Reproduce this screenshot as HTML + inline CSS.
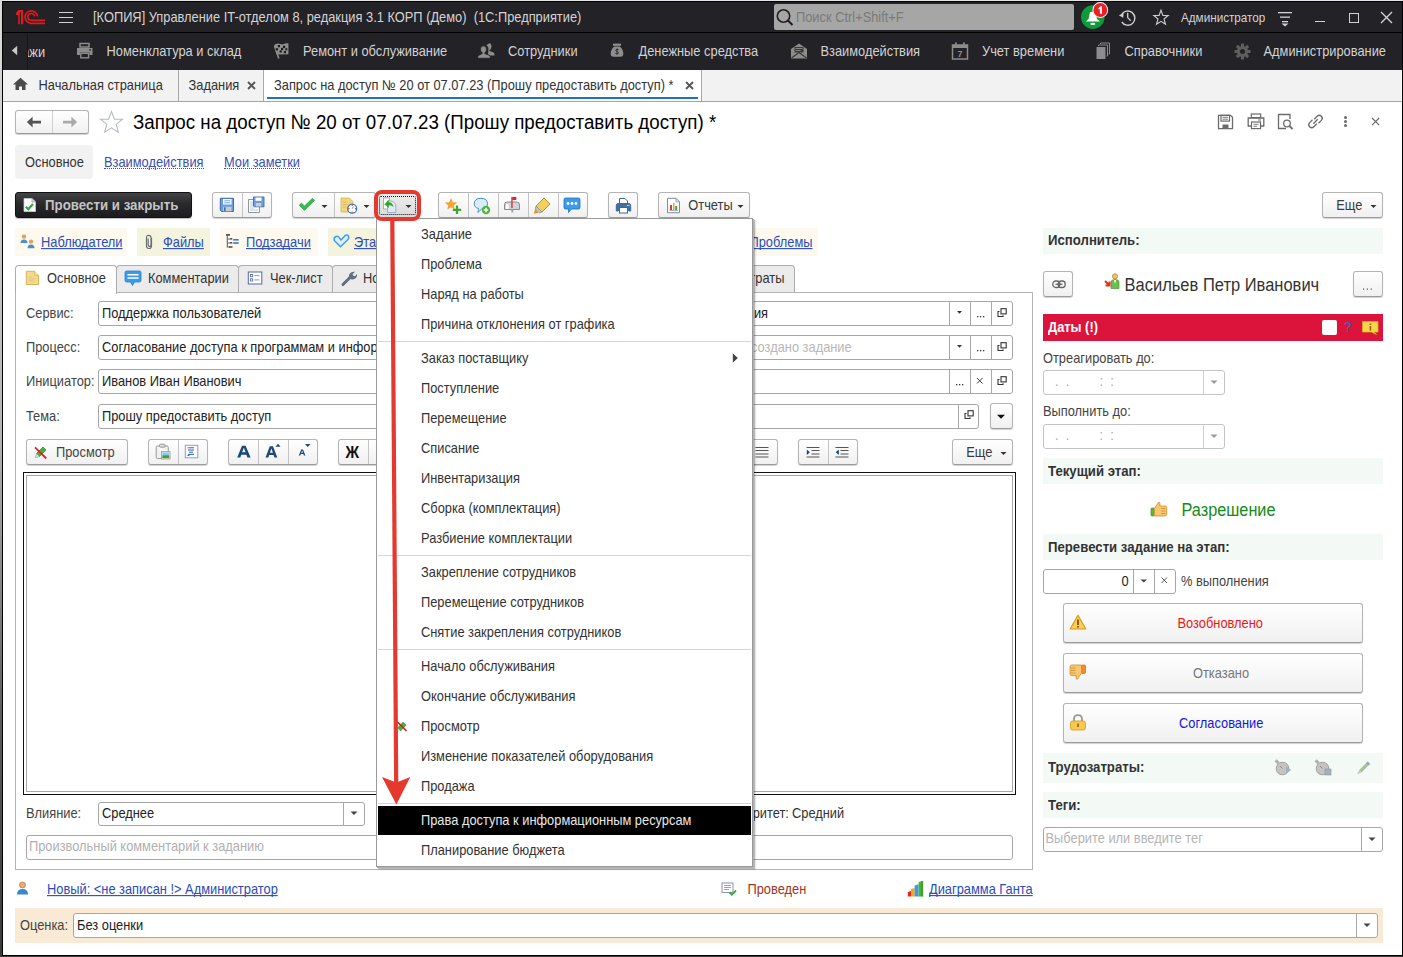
<!DOCTYPE html>
<html><head><meta charset="utf-8">
<style>
*{box-sizing:border-box;margin:0;padding:0}
html,body{width:1403px;height:957px;overflow:hidden;background:#fff}
body{position:relative;font-family:"Liberation Sans",sans-serif;font-size:13px;color:#333}
.a{position:absolute}
.t{position:absolute;white-space:nowrap;line-height:16px;font-size:12.85px;transform:scaleY(1.1);transform-origin:0 12.45px}
.btn{position:absolute;border:1px solid #b4b4b4;border-bottom-color:#9a9a9a;border-radius:3px;background:linear-gradient(#ffffff,#f0f0f0);box-shadow:0 1px 1px rgba(0,0,0,.18)}
.inp{position:absolute;border:1px solid #a6a6a6;border-radius:3px;background:#fff}
.vd{position:absolute;top:0;bottom:0;width:1px;background:#c8c8c8}
.lnk{color:#2b4cbb;text-decoration:underline;text-decoration-skip-ink:none}
.hdr{position:absolute;background:#f3faf6;left:1043px;width:340px;height:26px}
.hdr span{position:absolute;left:5px;top:5px;font-weight:bold;font-size:13.2px;line-height:16px;color:#333;white-space:nowrap;transform:scaleY(1.1);transform-origin:0 12.5px}
svg{position:absolute;overflow:visible}
</style></head><body>
<!-- outer frame -->
<div class="a" style="left:0;top:0;width:1403px;height:957px;background:#3c3f3c"></div>
<div class="a" style="left:0;top:0;width:1403px;height:2px;background:#e4e4e4"></div>
<div class="a" style="left:0;top:0;width:2px;height:957px;background:linear-gradient(#dcdcdc,#b4b4b4 45%,#5a5c5a 75%,#3a3c3a)"></div>
<div class="a" style="left:2px;top:1px;width:1401px;height:955px;background:#000"></div>
<div class="a" style="left:3px;top:2px;width:1399px;height:953px;background:#fff"></div>

<!-- title bar -->
<div class="a" style="left:3px;top:2px;width:1399px;height:30px;background:#232227"></div>
<div class="a" style="left:3px;top:32px;width:1399px;height:1px;background:#000"></div>
<!-- nav bar -->
<div class="a" style="left:3px;top:33px;width:1399px;height:37px;background:#232227"></div>
<div class="a" style="left:27px;top:33px;width:1px;height:37px;background:#18181b"></div>
<!-- tab bar -->
<div class="a" style="left:3px;top:70px;width:1398px;height:31px;background:#f2f2f2"></div>
<div class="a" style="left:3px;top:101px;width:1399px;height:1px;background:#a4a4a4"></div>


<!-- ===== TITLE BAR ===== -->
<svg style="left:0;top:0" width="60" height="32" viewBox="0 0 60 32">
 <path d="M16 13.3 L18.3 10 L23.1 10 L23.1 24.3 L21 24.3 L21 12.3 L19.8 12.3 L19.8 24.3 L18.2 24.3 L18.2 15 L16 15 Z" fill="#e3191d"/>
 <path d="M37.6 16.4 A6.3 6.3 0 1 0 31 23.4 L45 23.4" fill="none" stroke="#e3191d" stroke-width="1.7"/>
 <path d="M34.6 16.4 A3.4 3.4 0 1 0 31 20.3 L45 20.3" fill="none" stroke="#e3191d" stroke-width="1.7"/>
</svg>
<div class="a" style="left:59px;top:12px;width:14px;height:1px;background:#d2d2d2"></div>
<div class="a" style="left:59px;top:17px;width:14px;height:1px;background:#d2d2d2"></div>
<div class="a" style="left:59px;top:22px;width:14px;height:1px;background:#d2d2d2"></div>
<div class="t" style="left:93px;top:10px;color:#d4d4d4">[КОПИЯ] Управление IT-отделом 8, редакция 3.1 КОРП (Демо)&nbsp; (1С:Предприятие)</div>
<div class="a" style="left:774px;top:4px;width:300px;height:26px;background:#a6a6a6;border-radius:2px"></div>
<svg style="left:774px;top:4px" width="30" height="26"><circle cx="9.5" cy="12" r="6.2" fill="none" stroke="#1e1e1e" stroke-width="1.6"/><path d="M14 16.5 L18.5 21" stroke="#1e1e1e" stroke-width="2"/></svg>
<div class="t" style="left:796px;top:10px;color:#7a7a7a">Поиск Ctrl+Shift+F</div>
<svg style="left:1075px;top:0" width="40" height="32">
 <circle cx="17.8" cy="17.1" r="11.8" fill="#0f9a3c"/>
 <path d="M15 12 L20.5 12 L22 19 L25 21.6 L10.8 21.6 L13.6 19 Z" fill="#fff"/>
 <ellipse cx="17.8" cy="23.9" rx="2.6" ry="1.1" fill="#fff"/>
 <circle cx="25.3" cy="10" r="7.9" fill="#fff"/>
 <circle cx="25.3" cy="10" r="6.9" fill="#ec2024"/>
 <path d="M23.3 8.3 L25.6 6.3 L26.9 6.3 L26.9 13.8 L24.9 13.8 L24.9 8.9 L23.9 9.6 Z" fill="#fff"/>
</svg>
<svg style="left:1115px;top:8px" width="24" height="20" viewBox="0 0 24 20">
 <path d="M6.6 6.6 A7.1 7.1 0 1 1 6.8 14" fill="none" stroke="#d0d0d0" stroke-width="1.4"/>
 <path d="M3.8 7.2 L8.6 5.2 L8.2 9.8 Z" fill="#d0d0d0"/>
 <path d="M12.7 4.8 L12.7 9.6 L15.7 12.8" fill="none" stroke="#d0d0d0" stroke-width="1.3"/>
</svg>
<svg style="left:1150px;top:8px" width="22" height="20" viewBox="0 0 22 20">
 <path d="M11 2.2 L12.9 7.4 L18.2 7.6 L14 11 L15.5 16.3 L11 13.3 L6.5 16.3 L8 11 L3.8 7.6 L9.1 7.4 Z" fill="none" stroke="#cfcfcf" stroke-width="1.1" stroke-linejoin="miter"/>
</svg>
<div class="t" style="left:1181px;top:10px;font-size:11.7px;color:#d4d4d4">Администратор</div>
<svg style="left:1276px;top:8px" width="20" height="20">
 <rect x="2" y="4" width="14" height="1.3" fill="#d2d2d2"/><rect x="4" y="8.5" width="10" height="1.3" fill="#d2d2d2"/><rect x="6" y="13" width="6" height="1.3" fill="#d2d2d2"/>
 <path d="M5.5 15.5 L12.5 15.5 L9 18.5 Z" fill="#d2d2d2"/>
</svg>
<div class="a" style="left:1315px;top:21px;width:10px;height:1.4px;background:#d2d2d2"></div>
<div class="a" style="left:1349px;top:12.5px;width:10px;height:10px;border:1.4px solid #d2d2d2"></div>
<svg style="left:1379px;top:10px" width="16" height="16"><path d="M2 2 L13 13 M13 2 L2 13" stroke="#d2d2d2" stroke-width="1.4"/></svg>


<!-- ===== NAV BAR ===== -->
<svg style="left:10px;top:44px" width="10" height="14"><path d="M7.2 1.8 L7.2 11.2 L1.8 6.5 Z" fill="#c9c9c9"/></svg>
<div class="a" style="left:28px;top:33px;width:40px;height:37px;overflow:hidden"><div class="t" style="left:-36.5px;top:11.5px;color:#d2d2d2">Продажи</div></div>
<!-- printer -->
<svg style="left:76px;top:42px" width="18" height="18" viewBox="0 0 18 18">
 <path d="M4 1.5 H13 V5 H4 Z" fill="none" stroke="#8c8c8c" stroke-width="1.5"/>
 <path d="M1 6 H16.5 V13 H13.5 V10.5 H4 V13 H1 Z" fill="#8c8c8c"/>
 <rect x="4.8" y="11.3" width="7.8" height="4.5" fill="none" stroke="#8c8c8c" stroke-width="1.4"/>
 <rect x="13.2" y="7.2" width="1.6" height="1.4" fill="#232227"/>
</svg>
<div class="t" style="left:106.5px;top:44.2px;color:#d2d2d2">Номенклатура и склад</div>
<!-- flag -->
<svg style="left:272px;top:42px" width="20" height="18" viewBox="0 0 20 18">
 <path d="M2 3.2 Q3.5 1.6 6 1.6 L10.5 2.4 Q13 1.2 16.4 1.3 L16.4 12.3 L5.8 12.6 L4.5 12 Z" fill="#8e8e8e"/>
 <path d="M2.6 4 L6.8 16.5" stroke="#8e8e8e" stroke-width="1.6"/>
 <g fill="#1c1c1e"><rect x="5.8" y="3" width="2.2" height="2.2"/><rect x="11" y="3.8" width="2.2" height="2.2"/><rect x="3.8" y="6.2" width="2.2" height="2.2"/><rect x="9" y="5.9" width="2.2" height="2.2"/><rect x="13.3" y="6.2" width="2" height="2.2"/><rect x="7.6" y="8.4" width="2.2" height="2.2"/><rect x="11.8" y="9" width="2.2" height="2.2"/></g>
</svg>
<div class="t" style="left:303px;top:44.2px;color:#d2d2d2">Ремонт и обслуживание</div>
<!-- people -->
<svg style="left:477px;top:42px" width="20" height="18" viewBox="0 0 20 18">
 <g fill="#8e8e8e">
 <path d="M11.8 1.5 Q14.5 1.5 14.5 4.5 Q14.5 7 12.5 8 L12.5 9 L16.5 10.5 Q17.5 11 17.5 12.5 L17.5 13.5 L11 13.5 Z"/>
 <path d="M9.5 3.2 Q11.5 1 13.8 1.8 Q12.5 3 12.3 6.5 Z"/>
 </g>
 <path d="M6.5 3.8 Q9.6 3.8 9.6 7.2 Q9.6 9.8 7.8 10.8 L7.8 11.6 L12.2 13.2 Q13.3 13.7 13.3 15 L13.3 16.3 L0.7 16.3 L0.7 15 Q0.7 13.7 1.8 13.2 L5.2 11.6 L5.2 10.8 Q3.4 9.8 3.4 7.2 Q3.4 3.8 6.5 3.8 Z" fill="#8e8e8e" stroke="#232227" stroke-width="0.9"/>
</svg>
<div class="t" style="left:508px;top:44.2px;color:#d2d2d2">Сотрудники</div>
<!-- money bag -->
<svg style="left:609px;top:42px" width="16" height="18" viewBox="0 0 16 18">
 <path d="M4 1.6 H12 V3.8 H4 Z" fill="#8e8e8e"/>
 <path d="M5.2 4.6 H10.8 Q14.3 7.5 14.3 11.5 Q14.3 14.8 11.5 14.8 H4.5 Q1.7 14.8 1.7 11.5 Q1.7 7.5 5.2 4.6 Z" fill="#8e8e8e"/>
 <path d="M9.6 7.8 Q8 6.9 7 7.6 Q6 8.6 8 9.4 Q10.2 10.2 9.2 11.5 Q8 12.3 6.3 11.3 M8 6.5 V12.8" fill="none" stroke="#2a2a2c" stroke-width="0.9"/>
</svg>
<div class="t" style="left:638.5px;top:44.2px;color:#d2d2d2">Денежные средства</div>
<!-- envelope -->
<svg style="left:790px;top:42px" width="18" height="18" viewBox="0 0 18 18">
 <path d="M1 7 L9 1.5 L17 7 V16.5 H1 Z" fill="#8c8c8c"/>
 <rect x="4.5" y="5" width="9" height="5.5" fill="#3a3a3a"/>
 <path d="M5.5 6.5 h7 M5.5 8.5 h5" stroke="#8c8c8c" stroke-width="0.9"/>
 <path d="M1.5 16 L9 10.5 L16.5 16" fill="none" stroke="#3a3a3a" stroke-width="1.1"/>
</svg>
<div class="t" style="left:820.5px;top:44.2px;color:#d2d2d2">Взаимодействия</div>
<!-- calendar -->
<svg style="left:951px;top:42px" width="18" height="18" viewBox="0 0 18 18">
 <rect x="1.5" y="3" width="15" height="14" fill="none" stroke="#8c8c8c" stroke-width="1.5"/>
 <rect x="1.5" y="3" width="15" height="3" fill="#8c8c8c"/>
 <rect x="4" y="0.5" width="1.8" height="4" fill="#8c8c8c"/><rect x="12" y="0.5" width="1.8" height="4" fill="#8c8c8c"/>
 <text x="9" y="15.3" font-family="Liberation Sans" font-size="9" font-weight="bold" fill="#8c8c8c" text-anchor="middle">7</text>
</svg>
<div class="t" style="left:982px;top:44.2px;color:#d2d2d2">Учет времени</div>
<!-- copies -->
<svg style="left:1095px;top:42px" width="16" height="18" viewBox="0 0 16 18">
 <rect x="1.5" y="5" width="9" height="12" fill="#8c8c8c"/>
 <path d="M3.5 4 V3 H12.5 V14 H11.5" fill="none" stroke="#8c8c8c" stroke-width="1"/>
 <path d="M5.5 2 V1 H14.5 V12 H13.5" fill="none" stroke="#8c8c8c" stroke-width="1"/>
</svg>
<div class="t" style="left:1124.5px;top:44.2px;color:#d2d2d2">Справочники</div>
<!-- gear -->
<svg style="left:1234px;top:43px" width="17" height="17" viewBox="0 0 17 17">
 <g fill="#5e5e5e"><circle cx="8.5" cy="8.5" r="5.5"/>
 <rect x="7" y="0.5" width="3" height="16"/><rect x="0.5" y="7" width="16" height="3"/>
 <rect x="7" y="0.5" width="3" height="16" transform="rotate(45 8.5 8.5)"/><rect x="7" y="0.5" width="3" height="16" transform="rotate(-45 8.5 8.5)"/></g>
 <circle cx="8.5" cy="8.5" r="2.5" fill="#232227"/>
</svg>
<div class="t" style="left:1263.5px;top:44.2px;color:#d2d2d2">Администрирование</div>

<!-- ===== TAB BAR ===== -->
<svg style="left:12px;top:77px" width="17" height="14" viewBox="0 0 17 14">
 <path d="M8.5 0.8 L16 7.5 L13.5 7.5 L13.5 13 L10 13 L10 9.5 L7 9.5 L7 13 L3.5 13 L3.5 7.5 L1 7.5 Z" fill="#4a4a4a"/>
</svg>
<div class="t" style="left:38.5px;top:78.2px;color:#333">Начальная страница</div>
<div class="a" style="left:178px;top:70px;width:1px;height:31px;background:#a8a8a8"></div>
<div class="t" style="left:188.5px;top:78.2px;color:#333">Задания</div>
<svg style="left:246px;top:80px" width="11" height="11"><path d="M2 2 L9 9 M9 2 L2 9" stroke="#555" stroke-width="1.8"/></svg>
<div class="a" style="left:263px;top:70px;width:1px;height:31px;background:#a8a8a8"></div>
<div class="a" style="left:264px;top:70px;width:437px;height:31px;background:#fff"></div>
<div class="a" style="left:267px;top:97px;width:431px;height:2px;background:#1a73c8"></div>
<div class="t" style="left:274px;top:78.2px;color:#333">Запрос на доступ № 20 от 07.07.23 (Прошу предоставить доступ) *</div>
<svg style="left:684px;top:80px" width="11" height="11"><path d="M2 2 L9 9 M9 2 L2 9" stroke="#555" stroke-width="1.8"/></svg>
<div class="a" style="left:701px;top:70px;width:1px;height:31px;background:#a8a8a8"></div>


<!-- ===== FORM HEADER ===== -->
<div class="btn" style="left:15px;top:110px;width:74px;height:24px"></div>
<div class="a" style="left:52px;top:111px;width:1px;height:22px;background:#d0d0d0"></div>
<svg style="left:26px;top:116px" width="16" height="13" viewBox="0 0 16 13"><path d="M0.9 6.1 L6.6 0.8 L6.6 4.7 L15 4.7 L15 7.5 L6.6 7.5 L6.6 11.5 Z" fill="#545454"/></svg>
<svg style="left:62px;top:116px" width="16" height="13" viewBox="0 0 16 13"><path d="M15.1 6.1 L9.4 0.8 L9.4 4.7 L1 4.7 L1 7.5 L9.4 7.5 L9.4 11.5 Z" fill="#aaaaaa"/></svg>
<svg style="left:99px;top:110px" width="26" height="25" viewBox="0 0 26 25">
 <path d="M12.5 1.5 L15.4 9.1 L23.5 9.3 L17.2 14.4 L19.4 22.3 L12.5 17.8 L5.6 22.3 L7.8 14.4 L1.5 9.3 L9.6 9.1 Z" fill="none" stroke="#b4bcc4" stroke-width="1.1" stroke-linejoin="miter"/>
</svg>
<div class="t" style="left:133px;top:112px;font-size:18.75px;line-height:22px;color:#000">Запрос на доступ № 20 от 07.07.23 (Прошу предоставить доступ) *</div>
<!-- right icons -->
<svg style="left:1217px;top:114px" width="17" height="16" viewBox="0 0 17 16">
 <path d="M1.5 1.3 H13.5 L15.5 3.3 V14.7 H1.5 Z" fill="none" stroke="#6b6b6b" stroke-width="1.3"/>
 <rect x="4" y="1.3" width="8.5" height="5.8" fill="none" stroke="#6b6b6b" stroke-width="1.2"/>
 <path d="M5.5 3.3 h5.5 M5.5 5.2 h5.5" stroke="#6b6b6b" stroke-width="0.9"/>
 <rect x="5.5" y="10.5" width="6" height="4.5" fill="#6b6b6b"/>
</svg>
<svg style="left:1247px;top:113px" width="18" height="17" viewBox="0 0 18 17">
 <rect x="4.3" y="1" width="9.4" height="3.6" fill="none" stroke="#6b6b6b" stroke-width="1.2"/>
 <path d="M4 13 H1.2 V5 H16.8 V13 H14" fill="none" stroke="#6b6b6b" stroke-width="1.3"/>
 <rect x="4.5" y="9" width="9" height="6.6" fill="none" stroke="#6b6b6b" stroke-width="1.2"/>
 <path d="M6.5 11.3 h5 M6.5 13.3 h3.5 M11 7 h3" stroke="#6b6b6b" stroke-width="0.9"/>
</svg>
<svg style="left:1277px;top:113px" width="18" height="17" viewBox="0 0 18 17">
 <path d="M9 15.5 H1.5 V1.5 H13 V6" fill="none" stroke="#6b6b6b" stroke-width="1.3"/>
 <circle cx="10" cy="10.5" r="3.3" fill="none" stroke="#6b6b6b" stroke-width="1.3"/>
 <path d="M12.3 12.8 L15.5 16" stroke="#6b6b6b" stroke-width="1.8"/>
</svg>
<svg style="left:1307px;top:113px" width="18" height="17" viewBox="0 0 18 17">
 <path d="M7.2 6.3 L10.2 3.3 Q12.2 1.3 14.4 3.3 Q16.3 5.4 14.3 7.4 L11.5 10.2" fill="none" stroke="#6b6b6b" stroke-width="1.3"/>
 <path d="M9.8 10.7 L6.8 13.7 Q4.8 15.7 2.6 13.7 Q0.7 11.6 2.7 9.6 L5.5 6.8" fill="none" stroke="#6b6b6b" stroke-width="1.3"/>
 <path d="M6.3 10.7 L10.7 6.3" stroke="#6b6b6b" stroke-width="1.3"/>
</svg>
<svg style="left:1340px;top:114px" width="12" height="15"><circle cx="5.5" cy="3.4" r="1.5" fill="#6b6b6b"/><circle cx="5.5" cy="7.4" r="1.5" fill="#6b6b6b"/><circle cx="5.5" cy="11.4" r="1.5" fill="#6b6b6b"/></svg>
<svg style="left:1370px;top:116px" width="12" height="12"><path d="M2 2 L9.2 9.2 M9.2 2 L2 9.2" stroke="#6b6b6b" stroke-width="1.2"/></svg>

<!-- form tabs -->
<div class="a" style="left:15px;top:145px;width:78px;height:34px;background:#f2f2f2;border-radius:4px"></div>
<div class="t" style="left:25px;top:154.7px;color:#333">Основное</div>
<div class="t" style="left:104px;top:154.7px;color:#3a50b0">Взаимодействия</div>
<div class="a" style="left:104px;top:168px;width:100px;height:0;border-top:1px dotted #3a50b0"></div>
<div class="t" style="left:224px;top:154.7px;color:#3a50b0">Мои заметки</div>
<div class="a" style="left:224px;top:168px;width:76px;height:0;border-top:1px dotted #3a50b0"></div>


<!-- ===== TOOLBAR ===== -->
<div class="a" style="left:15px;top:192px;width:177px;height:26px;border-radius:3px;background:linear-gradient(#434346,#2a2a2d 45%,#1c1c1e);border:1px solid #111;box-shadow:0 1px 1px rgba(0,0,0,.25)"></div>
<svg style="left:22px;top:197px" width="16" height="16" viewBox="0 0 16 16">
 <path d="M2 1.5 H10 L13.5 5 V14.5 H2 Z" fill="#fff" stroke="#c9ccd4" stroke-width="0.8"/>
 <path d="M10 1.5 V5 H13.5" fill="#dde" stroke="#99a" stroke-width="0.8"/>
 <path d="M3.8 9.8 L6.3 12.2 L11 7" fill="none" stroke="#2fa83a" stroke-width="2.2"/>
</svg>
<div class="t" style="left:45px;top:197.6px;font-weight:bold;color:#c4c4c4;font-size:13.3px">Провести и закрыть</div>

<div class="btn" style="left:212px;top:192px;width:60px;height:26px"></div>
<div class="a" style="left:242px;top:193px;width:1px;height:24px;background:#c4c4c4"></div>
<svg style="left:219px;top:197px" width="16" height="16" viewBox="0 0 16 16">
 <path d="M1.3 1.3 H14.5 V14.5 H2.5 L1.3 13.3 Z" fill="#6d9ddb" stroke="#3d6cb0" stroke-width="1"/>
 <rect x="4" y="2" width="8.5" height="5.5" fill="#fff"/><path d="M5.3 3.8 h6 M5.3 5.8 h6" stroke="#6d9ddb" stroke-width="0.9"/>
 <rect x="4" y="9.8" width="8.5" height="4.5" fill="#c8cdd0"/><rect x="5" y="10.3" width="1.6" height="3.6" fill="#3d6cb0"/>
</svg>
<svg style="left:247px;top:196px" width="18" height="18" viewBox="0 0 18 18">
 <path d="M1.5 3.5 H12.5 V16.5 H1.5 Z" fill="#fff" stroke="#7d8a98" stroke-width="0.9"/>
 <path d="M3 6 h3 M3 8 h3 M3 10 h3 M3 12 h4 M3 14 h8" stroke="#98a4b0" stroke-width="0.6"/>
 <path d="M6.5 1 H17 V10.8 H7.3 L6.5 10 Z" fill="#6d9ddb" stroke="#3d6cb0" stroke-width="0.9"/>
 <rect x="8.5" y="1.5" width="6" height="3.3" fill="#fff"/>
 <rect x="8.7" y="7" width="5.5" height="3.5" fill="#c8cdd0"/>
</svg>

<div class="btn" style="left:292px;top:192px;width:84px;height:26px"></div>
<div class="a" style="left:334px;top:193px;width:1px;height:24px;background:#c4c4c4"></div>
<svg style="left:298px;top:197px" width="18" height="16" viewBox="0 0 18 16">
 <path d="M1.3 8.3 L6.5 13.3 L16.5 3.3 L14.3 1.4 L6.5 9.2 L3.5 6.2 Z" fill="#34c051" stroke="#1f9a36" stroke-width="0.8" stroke-linejoin="round"/>
</svg>
<svg style="left:320.5px;top:204px" width="8" height="5"><path d="M0.5 1 H6.5 L3.5 4 Z" fill="#333"/></svg>
<svg style="left:340px;top:197px" width="18" height="17" viewBox="0 0 18 17">
 <path d="M1 1 H9.3 L12.8 4.5 V15 H1 Z" fill="#f1d47e" stroke="#d9b449" stroke-width="0.8"/>
 <path d="M3 5 h3 M3 7.5 h4 M3 10 h3" stroke="#d1b060" stroke-width="0.7"/>
 <circle cx="12.2" cy="11.7" r="4.5" fill="#fff" stroke="#3d77b8" stroke-width="1.3"/>
 <circle cx="12.2" cy="8.3" r="0.7" fill="#e03030"/><circle cx="12.2" cy="15.1" r="0.7" fill="#e03030"/>
 <circle cx="8.8" cy="11.7" r="0.7" fill="#e03030"/><circle cx="15.6" cy="11.7" r="0.7" fill="#e03030"/>
 <path d="M12.2 11.7 L13.5 9.5" stroke="#3d77b8" stroke-width="0.8"/>
</svg>
<svg style="left:362.5px;top:204px" width="8" height="5"><path d="M0.5 1 H6.5 L3.5 4 Z" fill="#333"/></svg>
<!-- pressed button -->
<div class="a" style="left:376px;top:192px;width:42px;height:26px;background:linear-gradient(#eeeeee,#dadada);border:1px solid #a8a8a8;border-radius:0 3px 3px 0"></div>
<div class="a" style="left:379px;top:195.5px;width:36.5px;height:19.5px;border:1.3px dotted #111;border-radius:2px"></div>
<svg style="left:382px;top:197px" width="18" height="17" viewBox="0 0 18 17">
 <path d="M1.5 1 H7.5 V12 H1.5 Z" fill="#fff" stroke="#8a8f96" stroke-width="0.7"/>
 <path d="M5.5 4 H10.5 L13.8 7.3 V15.5 H5.5 Z" fill="#dfe9f3" stroke="#8aa3bc" stroke-width="0.8"/>
 <path d="M2.5 7.2 L6.8 2.8 L6.8 5.3 Q10.5 5.3 11.6 10 Q9.8 8.1 6.8 8.3 L6.8 11 Z" fill="#31a52c"/>
</svg>
<svg style="left:404.5px;top:204px" width="8" height="5"><path d="M0.5 1 H6.5 L3.5 4 Z" fill="#333"/></svg>

<div class="btn" style="left:438px;top:192px;width:150px;height:26px"></div>
<div class="a" style="left:468px;top:193px;width:1px;height:24px;background:#c4c4c4"></div>
<div class="a" style="left:498px;top:193px;width:1px;height:24px;background:#c4c4c4"></div>
<div class="a" style="left:528px;top:193px;width:1px;height:24px;background:#c4c4c4"></div>
<div class="a" style="left:558px;top:193px;width:1px;height:24px;background:#c4c4c4"></div>
<svg style="left:445px;top:197px" width="18" height="18" viewBox="0 0 18 18">
 <path d="M6 1 L7.8 5.3 L12.2 5.6 L8.8 8.4 L9.8 12.6 L6 10.2 L2.2 12.6 L3.2 8.4 L-0.2 5.6 L4.2 5.3 Z" fill="#f5a33a"/>
 <path d="M12 8.5 V17 M7.8 12.8 H16.2" stroke="#3fa52f" stroke-width="2.2"/>
</svg>
<svg style="left:473px;top:197px" width="18" height="18" viewBox="0 0 18 18">
 <path d="M8 1.3 Q14.5 1.3 14.5 6.8 Q14.5 12 8.5 12 L5 15.5 L5.5 11.5 Q1.3 10.5 1.3 6.8 Q1.3 1.3 8 1.3 Z" fill="#d8ecfa" stroke="#4a8ed0" stroke-width="1"/>
 <circle cx="13" cy="13" r="4.2" fill="#4bb33e"/><path d="M13 10.8 V15.2 M10.8 13 H15.2" stroke="#fff" stroke-width="1.6"/>
</svg>
<svg style="left:503px;top:196px" width="18" height="18" viewBox="0 0 18 18">
 <path d="M3.5 6 H14 Q16.5 6 16.5 9 V13.5 H1.5 V9 Q1.5 6 3.5 6 Z" fill="#d0d3d8" stroke="#7d8288" stroke-width="0.9"/>
 <rect x="3" y="8" width="2.5" height="5" fill="#fff"/>
 <rect x="8.3" y="1" width="1.3" height="11" fill="#e0252a"/><rect x="9.3" y="1" width="4" height="3" fill="#e0252a"/>
 <rect x="8.3" y="13.5" width="2" height="3" fill="#9aa"/>
</svg>
<svg style="left:533px;top:197px" width="18" height="18" viewBox="0 0 18 18">
 <path d="M11 1 L17 7 L9 15 L3 9 Z" fill="#f1d05b" stroke="#b78a1c" stroke-width="0.9"/>
 <path d="M3 9 L9 15 L6.5 16 L2.2 11.8 Z" fill="#c8c8c8" stroke="#8a8a8a" stroke-width="0.7"/>
 <path d="M2.2 11.8 L0.8 16.8 L5.5 15.8" fill="#d79a25"/>
</svg>
<svg style="left:563px;top:197px" width="18" height="18" viewBox="0 0 18 18">
 <path d="M2.5 1 H15.5 Q17 1 17 2.5 V10.5 Q17 12 15.5 12 H8.5 L5.5 15.5 V12 H2.5 Q1 12 1 10.5 V2.5 Q1 1 2.5 1 Z" fill="#3c9ae8" stroke="#1f72c6" stroke-width="0.8"/>
 <circle cx="5" cy="6.5" r="1.4" fill="#fff"/><circle cx="9" cy="6.5" r="1.4" fill="#fff"/><circle cx="13" cy="6.5" r="1.4" fill="#fff"/>
</svg>

<div class="btn" style="left:608px;top:192px;width:30px;height:26px"></div>
<svg style="left:615px;top:197px" width="17" height="17" viewBox="0 0 17 17">
 <path d="M4.5 7 V1.5 H10 L12.5 4 V7" fill="#fff" stroke="#3e6795" stroke-width="1"/>
 <path d="M3 14 H1.3 V8.5 Q1.3 6.5 3.3 6.5 H13.7 Q15.7 6.5 15.7 8.5 V14 H14" fill="#42709f" stroke="#3e6795" stroke-width="1"/>
 <rect x="4.5" y="10.5" width="8" height="5.5" fill="#fff" stroke="#3e6795" stroke-width="1"/>
 <circle cx="12.7" cy="8.5" r="0.6" fill="#fff"/><circle cx="14" cy="8.5" r="0.6" fill="#fff"/>
</svg>
<div class="btn" style="left:658px;top:192px;width:92px;height:26px"></div>
<svg style="left:666px;top:197px" width="16" height="17" viewBox="0 0 16 17">
 <path d="M1.5 1.3 H10 L13.5 4.8 V15.7 H1.5 Z" fill="#fff" stroke="#7a8ea4" stroke-width="1"/>
 <path d="M10 1.3 V4.8 H13.5" fill="none" stroke="#7a8ea4" stroke-width="0.8"/>
 <rect x="4" y="8" width="2" height="5" fill="#e23a2a"/><rect x="7" y="6" width="1.5" height="7" fill="#f0a030"/><rect x="9.2" y="9" width="2" height="4" fill="#3aa83a"/>
 <path d="M3.5 13.5 H12" stroke="#777" stroke-width="0.6"/>
</svg>
<div class="t" style="left:688.3px;top:198.2px;color:#3a3a3a">Отчеты</div>
<svg style="left:737px;top:204px" width="8" height="5"><path d="M0.5 1 H6.5 L3.5 4 Z" fill="#333"/></svg>

<div class="btn" style="left:1322px;top:192px;width:61px;height:26px"></div>
<div class="t" style="left:1336.3px;top:198.2px;color:#3a3a3a">Еще</div>
<svg style="left:1369.5px;top:204px" width="8" height="5"><path d="M0.5 1 H6.5 L3.5 4 Z" fill="#333"/></svg>


<!-- ===== LINKS ROW ===== -->
<div class="a" style="left:15px;top:228px;width:112px;height:28px;background:#fdf9ee"></div>
<svg style="left:20px;top:234px" width="16" height="15" viewBox="0 0 16 15">
 <circle cx="4" cy="2.6" r="2.2" fill="#e0a060"/><path d="M0.5 9 Q0.5 5.5 4 5.5 Q7.5 5.5 7.5 9 Z" fill="#4a90c8"/>
 <circle cx="11" cy="7.6" r="2.2" fill="#e0a060"/><path d="M7.5 14.3 Q7.5 10.5 11 10.5 Q14.5 10.5 14.5 14.3 Z" fill="#4a90c8"/>
</svg>
<div class="t lnk" style="left:41px;top:234.6px;color:#2b4cbb">Наблюдатели</div>
<div class="a" style="left:137px;top:228px;width:73px;height:28px;background:#f4f3dd"></div>
<svg style="left:144px;top:234px" width="12" height="16" viewBox="0 0 12 16">
 <path d="M7.5 4 V12 Q7.5 14.5 5 14.5 Q2.5 14.5 2.5 12 V3.5 Q2.5 1.3 4.8 1.3 Q7 1.3 7 3.5 V11 Q7 12.3 5.5 12.3 Q4.2 12.3 4.2 11 V4.5" fill="none" stroke="#6a6e74" stroke-width="1.2"/>
</svg>
<div class="t lnk" style="left:163px;top:234.6px;color:#2b4cbb">Файлы</div>
<div class="a" style="left:220px;top:228px;width:98px;height:28px;background:#fdf9ee"></div>
<svg style="left:225px;top:233px" width="15" height="16" viewBox="0 0 15 16">
 <rect x="1" y="1" width="4" height="1.8" fill="#555"/><path d="M2.3 2 V14 H5" fill="none" stroke="#666" stroke-width="1.1"/>
 <rect x="5" y="5" width="2.3" height="1.6" fill="#555"/><rect x="8.2" y="6" width="5.5" height="1.6" fill="#3a7ac0"/>
 <rect x="5" y="9" width="2.3" height="1.6" fill="#555"/><rect x="8.2" y="9.2" width="5.5" height="1.6" fill="#3a7ac0"/>
 <path d="M2.3 6 H5 M2.3 10 H5" stroke="#666" stroke-width="1"/><rect x="4" y="13.2" width="3.5" height="1.6" fill="#555"/>
</svg>
<div class="t lnk" style="left:246px;top:234.6px;color:#2b4cbb">Подзадачи</div>
<div class="a" style="left:328px;top:228px;width:49px;height:28px;background:#f4f3dd"></div>
<svg style="left:333px;top:234px" width="17" height="14" viewBox="0 0 17 14">
 <path d="M1.3 6.5 Q0.5 3.5 3 2.5 Q5.5 1.8 7 4.5 L8 6 L12.5 1.3 Q15 0.5 15.8 2.8 Q16 4.5 14.5 6 L7.5 12.8 Z" fill="#dceefc" stroke="#3fa0e8" stroke-width="1.5" stroke-linejoin="round"/>
</svg>
<div class="a" style="left:354px;top:228px;width:22px;height:28px;overflow:hidden"><div class="t lnk" style="left:0;top:6.6px;color:#2b4cbb">Этапы</div></div>
<div class="a" style="left:752px;top:228px;width:66px;height:28px;background:#fdf9ee"></div>
<div class="t lnk" style="left:749.5px;top:234.6px;color:#2b4cbb">Проблемы</div>

<!-- ===== TABS ===== -->
<div class="a" style="left:116px;top:265px;width:123px;height:28px;background:#ebebeb;border:1px solid #acacac;border-bottom:none;border-radius:4px 4px 0 0"></div>
<div class="a" style="left:238px;top:265px;width:95px;height:28px;background:#ebebeb;border:1px solid #acacac;border-bottom:none;border-radius:4px 4px 0 0"></div>
<div class="a" style="left:332px;top:265px;width:463px;height:28px;background:#ebebeb;border:1px solid #acacac;border-bottom:none;border-radius:4px 4px 0 0"></div>
<div class="a" style="left:15px;top:292px;width:1018px;height:578px;border:1px solid #b4b4b4"></div>
<div class="a" style="left:15px;top:265px;width:102px;height:29px;background:#fff;border:1px solid #acacac;border-bottom:none;border-radius:4px 4px 0 0"></div>
<svg style="left:25px;top:270px" width="15" height="16" viewBox="0 0 15 16">
 <path d="M1.3 1.3 H9.5 L13.5 5.3 V14.5 H1.3 Z" fill="#f3da8e" stroke="#d6b25a" stroke-width="1" stroke-linejoin="round"/>
 <path d="M9.5 1.3 V5.3 H13.5" fill="#f8e8b0" stroke="#d6b25a" stroke-width="0.8"/>
 <path d="M3.5 7 H7 M3.5 9 H11 M3.5 11 H9" stroke="#dcc070" stroke-width="0.8"/>
</svg>
<div class="t" style="left:47px;top:270.6px;color:#333">Основное</div>
<svg style="left:124px;top:270px" width="18" height="17" viewBox="0 0 18 17">
 <path d="M2.5 1 H15.5 Q17 1 17 2.5 V10.5 Q17 12 15.5 12 H10.5 L8.5 15.5 L6.5 12 H2.5 Q1 12 1 10.5 V2.5 Q1 1 2.5 1 Z" fill="#3d9be6" stroke="#2a7fd0" stroke-width="0.8"/>
 <path d="M3.5 4.8 H14.5 M3.5 8 H14.5" stroke="#fff" stroke-width="1.4"/>
</svg>
<div class="t" style="left:148px;top:270.6px;color:#333">Комментарии</div>
<svg style="left:247px;top:271px" width="16" height="14" viewBox="0 0 16 14">
 <rect x="1.3" y="1" width="13.5" height="12" fill="#fff" stroke="#5468a8" stroke-width="1"/>
 <rect x="3.5" y="3.5" width="2.2" height="2.2" fill="none" stroke="#5468a8" stroke-width="0.8"/><rect x="3.5" y="7.8" width="2.2" height="2.2" fill="none" stroke="#5468a8" stroke-width="0.8"/>
 <path d="M7.3 4.6 H12.5 M7.3 8.9 H12.5" stroke="#8090b8" stroke-width="0.9"/>
</svg>
<div class="t" style="left:270px;top:270.6px;color:#333">Чек-лист</div>
<svg style="left:340px;top:270px" width="18" height="17" viewBox="0 0 18 17">
 <path d="M3 14.5 L10 7.5" stroke="#607080" stroke-width="3" stroke-linecap="round"/>
 <path d="M9.2 8.5 Q8 4.5 11 2.5 Q13 1.3 15 1.8 L12.5 4.3 L13.3 5.8 L15 6.3 L17 3.8 Q17.5 7 15 8.8 Q12.5 10 10 9" fill="#607080"/>
</svg>
<div class="a" style="left:363px;top:265px;width:13px;height:27px;overflow:hidden"><div class="t" style="left:0;top:5.6px;color:#333">Новое</div></div>
<div class="t" style="left:702px;top:270.6px;color:#333">Трудозатраты</div>

<!-- ===== FIELDS ===== -->
<div class="t" style="left:26px;top:305.8px;color:#444">Сервис:</div>
<div class="inp" style="left:98px;top:301px;width:915px;height:25px"></div>
<div class="t" style="left:102px;top:305.8px;color:#222">Поддержка пользователей</div>
<div class="t" style="left:708px;top:305.8px;color:#222">Категория</div>
<div class="t" style="left:26px;top:339.5px;color:#444">Процесс:</div>
<div class="inp" style="left:98px;top:335px;width:915px;height:25px"></div>
<div class="t" style="left:102px;top:339.5px;color:#222">Согласование доступа к программам и информационным ресурсам</div>
<div class="t" style="left:26px;top:374.4px;color:#444">Инициатор:</div>
<div class="inp" style="left:98px;top:369px;width:915px;height:25px"></div>
<div class="t" style="left:102px;top:374.4px;color:#222">Иванов Иван Иванович</div>
<div class="t" style="left:26px;top:408.8px;color:#444">Тема:</div>
<div class="inp" style="left:98px;top:404px;width:881px;height:25px"></div>
<div class="t" style="left:102px;top:408.8px;color:#222">Прошу предоставить доступ</div>
<div class="a" style="left:949px;top:302px;width:1px;height:23px;background:#a8a8a8"></div><div class="a" style="left:970px;top:302px;width:1px;height:23px;background:#a8a8a8"></div><div class="a" style="left:991px;top:302px;width:1px;height:23px;background:#a8a8a8"></div><svg style="left:997px;top:307.5px" width="11" height="11"><rect x="4" y="0.7" width="5.2" height="5.2" fill="none" stroke="#333" stroke-width="1.1"/><path d="M2.5 3.5 H1 V8.5 H6 V7.2" fill="none" stroke="#333" stroke-width="1.1"/></svg><div class="a" style="left:949px;top:336px;width:1px;height:23px;background:#a8a8a8"></div><div class="a" style="left:970px;top:336px;width:1px;height:23px;background:#a8a8a8"></div><div class="a" style="left:991px;top:336px;width:1px;height:23px;background:#a8a8a8"></div><svg style="left:997px;top:341.5px" width="11" height="11"><rect x="4" y="0.7" width="5.2" height="5.2" fill="none" stroke="#333" stroke-width="1.1"/><path d="M2.5 3.5 H1 V8.5 H6 V7.2" fill="none" stroke="#333" stroke-width="1.1"/></svg><div class="a" style="left:949px;top:370px;width:1px;height:23px;background:#a8a8a8"></div><div class="a" style="left:970px;top:370px;width:1px;height:23px;background:#a8a8a8"></div><div class="a" style="left:991px;top:370px;width:1px;height:23px;background:#a8a8a8"></div><svg style="left:997px;top:375.5px" width="11" height="11"><rect x="4" y="0.7" width="5.2" height="5.2" fill="none" stroke="#333" stroke-width="1.1"/><path d="M2.5 3.5 H1 V8.5 H6 V7.2" fill="none" stroke="#333" stroke-width="1.1"/></svg><svg style="left:956px;top:310px" width="7" height="5"><path d="M1 1 H6 L3.5 3.8 Z" fill="#333"/></svg><svg style="left:977px;top:315.5px" width="9" height="3"><rect x="0" y="0" width="1.3" height="1.3" fill="#333"/><rect x="3" y="0" width="1.3" height="1.3" fill="#333"/><rect x="6" y="0" width="1.3" height="1.3" fill="#333"/></svg><svg style="left:956px;top:344px" width="7" height="5"><path d="M1 1 H6 L3.5 3.8 Z" fill="#333"/></svg><svg style="left:977px;top:349.5px" width="9" height="3"><rect x="0" y="0" width="1.3" height="1.3" fill="#333"/><rect x="3" y="0" width="1.3" height="1.3" fill="#333"/><rect x="6" y="0" width="1.3" height="1.3" fill="#333"/></svg><svg style="left:956px;top:383.5px" width="9" height="3"><rect x="0" y="0" width="1.3" height="1.3" fill="#333"/><rect x="3" y="0" width="1.3" height="1.3" fill="#333"/><rect x="6" y="0" width="1.3" height="1.3" fill="#333"/></svg><svg style="left:975px;top:376px" width="10" height="10"><path d="M2 2 L7.5 7.5 M7.5 2 L2 7.5" stroke="#444" stroke-width="1"/></svg><div class="t" style="left:731px;top:339.5px;color:#b8b8b8">Не создано задание</div><div class="a" style="left:958px;top:405px;width:1px;height:23px;background:#a8a8a8"></div><svg style="left:964px;top:409.5px" width="11" height="11"><rect x="4" y="0.7" width="5.2" height="5.2" fill="none" stroke="#333" stroke-width="1.1"/><path d="M2.5 3.5 H1 V8.5 H6 V7.2" fill="none" stroke="#333" stroke-width="1.1"/></svg><div class="btn" style="left:990px;top:403px;width:23px;height:26px"></div><svg style="left:996px;top:414px" width="10" height="6"><path d="M1 0.8 H9 L5 4.8 Z" fill="#111"/></svg>

<!-- ===== FORMAT TOOLBAR ===== -->
<div class="btn" style="left:26px;top:439px;width:102px;height:26px"></div>
<svg style="left:33px;top:444px" width="16" height="16" viewBox="0 0 16 16">
 <path d="M3.5 9.5 L10 3 L13 6 L6.5 12.5 Z" fill="#4cad3c" stroke="#2e7f22" stroke-width="0.7"/>
 <path d="M3.5 9.5 L6.5 12.5 L2.3 13.7 Z" fill="#e8e8e0" stroke="#6a8a60" stroke-width="0.5"/>
 <path d="M2 3.3 L13.3 14.5" stroke="#d8262a" stroke-width="1.8"/>
</svg>
<div class="t" style="left:56px;top:444.5px;color:#444">Просмотр</div>
<div class="btn" style="left:148px;top:439px;width:60px;height:26px"></div>
<div class="a" style="left:178px;top:440px;width:1px;height:24px;background:#c4c4c4"></div>
<svg style="left:155px;top:443px" width="16" height="17" viewBox="0 0 16 17">
 <path d="M2.5 3 H12 Q13.3 3 13.3 4.3 V8 M8 15.5 H2.5 Q1.2 15.5 1.2 14.2 V4.3 Q1.2 3 2.5 3" fill="#f0f0f0" stroke="#999" stroke-width="1"/>
 <rect x="4.5" y="1.2" width="5.5" height="3" rx="1" fill="#ddd" stroke="#888" stroke-width="0.8"/>
 <rect x="6.5" y="8.5" width="8.5" height="7.5" fill="#fff" stroke="#999" stroke-width="0.8"/>
 <path d="M7.3 15.3 V12.5 Q9.5 10.5 11 12 Q12.5 11 14.3 12.5 V15.3 Z" fill="#4a9a38"/><rect x="7.3" y="9.3" width="7" height="3" fill="#8cc8e8"/>
</svg>
<svg style="left:184px;top:444px" width="15" height="15" viewBox="0 0 15 15">
 <rect x="1.3" y="1.3" width="12.5" height="12.5" fill="#fff" stroke="#8aa0c0" stroke-width="1"/>
 <path d="M5 3.8 h5 M4 6 h6 M5 8.2 h4 M4 10.4 h6" stroke="#2e58c8" stroke-width="1"/><path d="M3.5 3.8 h1.3 M3.5 11.5 h2" stroke="#e03030" stroke-width="1"/>
</svg>
<div class="btn" style="left:228px;top:439px;width:90px;height:26px"></div>
<div class="a" style="left:258px;top:440px;width:1px;height:24px;background:#c4c4c4"></div>
<div class="a" style="left:288px;top:440px;width:1px;height:24px;background:#c4c4c4"></div>
<svg style="left:236px;top:444px" width="16" height="15" viewBox="0 0 16 15"><path d="M1.2 13.5 L6 1.8 H9.6 L14.6 13.5 H11.4 L10.4 10.8 H5.3 L4.3 13.5 Z M6.1 8.3 H9.6 L7.85 3.8 Z" fill="#1c4a78"/></svg>
<svg style="left:264px;top:443px" width="18" height="16" viewBox="0 0 18 16"><path d="M1.5 14.5 L5.8 3.3 H9 L13.3 14.5 H10.5 L9.6 12 H5.2 L4.3 14.5 Z M5.9 9.7 H8.9 L7.4 5.6 Z" fill="#1c4a78"/><path d="M11.5 3.8 L14 0.8 L16.5 3.8 Z" fill="#1c4a78"/></svg>
<svg style="left:297px;top:443px" width="16" height="15" viewBox="0 0 16 15"><path d="M1.8 12.5 L4.2 6.5 H6 L8.4 12.5 H6.9 L6.4 11.1 H3.8 L3.3 12.5 Z M4.2 9.8 H6 L5.1 7.5 Z" fill="#1c4a78"/><path d="M8 1 H13.5 L10.75 4 Z" fill="#1c4a78"/></svg>
<div class="btn" style="left:338px;top:439px;width:45px;height:26px"></div>
<div class="a" style="left:368px;top:440px;width:1px;height:24px;background:#c4c4c4"></div>
<div class="t" style="left:345.5px;top:444.5px;color:#111;font-weight:bold;font-size:15px">Ж</div>
<div class="btn" style="left:740px;top:439px;width:38px;height:26px"></div>
<svg style="left:755px;top:446px" width="14" height="12"><path d="M0.5 1.5 H13.5 M0.5 4.5 H13.5 M0.5 8 H13.5 M0.5 11 H13.5" stroke="#555" stroke-width="1"/></svg>
<div class="btn" style="left:798px;top:439px;width:60px;height:26px"></div>
<div class="a" style="left:828px;top:440px;width:1px;height:24px;background:#c4c4c4"></div>
<svg style="left:806px;top:446px" width="14" height="12"><path d="M0.5 1.5 H13.5 M5.5 4.5 H13.5 M5.5 8 H13.5 M0.5 11 H13.5" stroke="#555" stroke-width="1"/><path d="M0.8 3.5 L3.8 6.3 L0.8 9 Z" fill="#15426e"/></svg>
<svg style="left:835px;top:446px" width="14" height="12"><path d="M0.5 1.5 H13.5 M5.5 4.5 H13.5 M5.5 8 H13.5 M0.5 11 H13.5" stroke="#555" stroke-width="1"/><path d="M3.8 3.5 L0.8 6.3 L3.8 9 Z" fill="#15426e"/></svg>
<div class="btn" style="left:952px;top:439px;width:61px;height:26px"></div>
<div class="t" style="left:966.3px;top:444.5px;color:#3a3a3a">Еще</div>
<svg style="left:999.5px;top:451px" width="8" height="5"><path d="M0.5 1 H6.5 L3.5 4 Z" fill="#333"/></svg>

<!-- editor -->
<div class="a" style="left:23px;top:472px;width:993px;height:323px;border:1px solid #111"></div>
<div class="a" style="left:26px;top:475px;width:987px;height:317px;border:1px solid #a8a8a8"></div>

<!-- influence -->
<div class="t" style="left:26px;top:805.8px;color:#444">Влияние:</div>
<div class="inp" style="left:98px;top:802px;width:267px;height:24px"></div>
<div class="a" style="left:343px;top:803px;width:1px;height:22px;background:#a8a8a8"></div>
<svg style="left:350px;top:811px" width="8" height="5"><path d="M0.5 0.5 H7.5 L4 4 Z" fill="#444"/></svg>
<div class="t" style="left:102px;top:805.8px;color:#222">Среднее</div>
<div class="t" style="left:722px;top:806.2px;color:#333">Приоритет:</div><div class="t" style="left:792px;top:806.2px;color:#333">Средний</div>
<div class="inp" style="left:26px;top:835px;width:987px;height:25px"></div>
<div class="t" style="left:29px;top:839.3px;color:#b0b0b0">Произвольный комментарий к заданию</div>

<!-- status row -->
<svg style="left:16px;top:881px" width="13" height="14" viewBox="0 0 13 14">
 <circle cx="6.5" cy="4" r="3" fill="#e8b070" stroke="#a06830" stroke-width="0.6"/>
 <path d="M1 13.5 Q1 8 6.5 8 Q12 8 12 13.5 Z" fill="#3a88c8"/>
</svg>
<div class="t lnk" style="left:47px;top:881.8px;color:#2b4cbb">Новый: &lt;не записан !&gt; Администратор</div>
<svg style="left:721px;top:882px" width="16" height="14" viewBox="0 0 16 14">
 <rect x="1" y="1" width="11" height="9.5" fill="#fff" stroke="#7a8a9a" stroke-width="0.9"/>
 <path d="M3 3.5 h7 M3 5.5 h7 M3 7.5 h5" stroke="#8090a0" stroke-width="0.8"/>
 <path d="M8.5 10.5 L10.8 12.8 L15 8.5" fill="none" stroke="#3aa83a" stroke-width="1.8"/>
</svg>
<div class="t" style="left:747.5px;top:881.8px;color:#a23422">Проведен</div>
<svg style="left:907px;top:880px" width="18" height="17" viewBox="0 0 18 17">
 <path d="M0.8 12 L4 11 V16.5 H0.8 Z" fill="#e8261e"/>
 <path d="M4 9 L7.6 8 V16.5 H4 Z" fill="#f5a81c"/>
 <path d="M7.6 5.5 L11.6 4.3 V16.5 H7.6 Z" fill="#3d9ae8"/>
 <path d="M11.6 2 L16.2 0.8 V16.5 H11.6 Z" fill="#4fb23a"/>
 <path d="M15 1.3 V16.5" stroke="#2e8a22" stroke-width="1"/>
</svg>
<div class="t lnk" style="left:929px;top:881.8px;color:#2b4cbb">Диаграмма Ганта</div>

<!-- rating -->
<div class="a" style="left:15px;top:908px;width:1368px;height:35px;background:#f9ead6"></div>
<div class="t" style="left:20px;top:918.2px;color:#444">Оценка:</div>
<div class="inp" style="left:73px;top:913px;width:1305px;height:25px"></div>
<div class="a" style="left:1356px;top:914px;width:1px;height:23px;background:#a8a8a8"></div>
<svg style="left:1363px;top:923px" width="8" height="5"><path d="M0.5 0.5 H7.5 L4 4 Z" fill="#444"/></svg>
<div class="t" style="left:77px;top:918.2px;color:#222">Без оценки</div>


<!-- ===== RIGHT PANEL ===== -->
<div class="hdr" style="top:228px"><span style="top:5.2px">Исполнитель:</span></div>
<div class="btn" style="left:1043px;top:271px;width:30px;height:26px"></div>
<svg style="left:1052px;top:280px" width="14" height="9" viewBox="0 0 14 9">
 <rect x="0.8" y="1" width="7" height="6.5" rx="3" fill="none" stroke="#666" stroke-width="1.3"/>
 <rect x="6.2" y="1" width="7" height="6.5" rx="3" fill="none" stroke="#666" stroke-width="1.3"/>
 <path d="M3.5 4.25 H10.5" stroke="#666" stroke-width="1.3"/>
</svg>
<svg style="left:1104px;top:273px" width="18" height="17" viewBox="0 0 18 17">
 <circle cx="11" cy="3.3" r="2.6" fill="#f2c060" stroke="#a87a20" stroke-width="0.6"/>
 <path d="M7 15.5 V9 Q7 6.5 11 6.5 Q15 6.5 15 9 V15.5 Z" fill="#6cc04a" stroke="#3a8a2a" stroke-width="0.6"/>
 <path d="M10 7 L11 11 L12 7 Z" fill="#fff"/>
 <path d="M1 8 L5.5 12.5 M5.5 8.5 V12.5 H1.5" fill="none" stroke="#e23020" stroke-width="2"/>
</svg>
<div class="t" style="left:1124.5px;top:274.6px;font-size:16.5px;line-height:20px;color:#333">Васильев Петр Иванович</div>
<div class="btn" style="left:1353px;top:271px;width:30px;height:26px"></div>
<svg style="left:1362px;top:288px" width="12" height="3"><rect x="1" y="0.5" width="1.2" height="1.2" fill="#555"/><rect x="4.8" y="0.5" width="1.2" height="1.2" fill="#555"/><rect x="8.6" y="0.5" width="1.2" height="1.2" fill="#555"/></svg>

<div class="a" style="left:1043px;top:314px;width:340px;height:27px;background:#dc143c"></div>
<div class="t" style="left:1048px;top:320.3px;font-weight:bold;color:#fff">Даты (!)</div>
<div class="a" style="left:1322px;top:320px;width:15px;height:15px;background:#fff;border-radius:2px"></div>
<div class="t" style="left:1344px;top:320.3px;font-size:13.5px;color:#3564c4">?</div>
<svg style="left:1361px;top:320px" width="19" height="16" viewBox="0 0 19 16">
 <path d="M1.5 1.5 H17 V12 H13 L15.5 14.5 L10.5 12 H1.5 Z" fill="#f6d648" stroke="#d8b020" stroke-width="0.8"/>
 <rect x="8.6" y="6" width="1.6" height="4.5" fill="#8a6a10"/><rect x="8.6" y="3.5" width="1.6" height="1.5" fill="#8a6a10"/>
</svg>

<div class="t" style="left:1043px;top:350.7px;color:#444">Отреагировать до:</div>
<div class="inp" style="left:1043px;top:370px;width:182px;height:25px;border-color:#c4c4c4"></div>
<div class="a" style="left:1203px;top:371px;width:1px;height:23px;background:#d0d0d0"></div>
<svg style="left:1210px;top:380px" width="8" height="5"><path d="M0.5 0.5 H7.5 L4 4 Z" fill="#9a9a9a"/></svg>
<div class="t" style="left:1055px;top:374px;color:#aaa;letter-spacing:0">.&nbsp;&nbsp;.</div>
<div class="t" style="left:1099.5px;top:374px;color:#aaa">:&nbsp;&nbsp;:</div>
<div class="t" style="left:1043px;top:403.8px;color:#444">Выполнить до:</div>
<div class="inp" style="left:1043px;top:424px;width:182px;height:25px;border-color:#c4c4c4"></div>
<div class="a" style="left:1203px;top:425px;width:1px;height:23px;background:#d0d0d0"></div>
<svg style="left:1210px;top:434px" width="8" height="5"><path d="M0.5 0.5 H7.5 L4 4 Z" fill="#9a9a9a"/></svg>
<div class="t" style="left:1055px;top:428px;color:#aaa">.&nbsp;&nbsp;.</div>
<div class="t" style="left:1099.5px;top:428px;color:#aaa">:&nbsp;&nbsp;:</div>

<div class="hdr" style="top:458px"><span style="top:6.0px">Текущий этап:</span></div>
<svg style="left:1150px;top:501px" width="18" height="16" viewBox="0 0 18 16">
 <rect x="1" y="7" width="3.3" height="8" rx="1.2" fill="#5cb83a" stroke="#3a8a22" stroke-width="0.7"/>
 <path d="M4.3 7.5 L7.5 3 Q8 1 9.3 1.3 Q10.5 1.8 9.8 5 H15 Q16.7 5 16.7 6.7 V13 Q16.7 15 14.8 15 H4.3 Z" fill="#f8c870" stroke="#d08a30" stroke-width="0.8"/>
 <path d="M11 7.5 H15.5 M11 10 H15.5 M11 12.5 H15.5" stroke="#d08a30" stroke-width="0.8"/>
</svg>
<div class="t" style="left:1181.5px;top:499.6px;font-size:16.3px;line-height:20px;color:#178a17">Разрешение</div>
<div class="hdr" style="top:534px"><span style="top:6.2px">Перевести задание на этап:</span></div>

<div class="inp" style="left:1043px;top:569px;width:133px;height:25px"></div>
<div class="a" style="left:1133px;top:570px;width:1px;height:23px;background:#a8a8a8"></div>
<div class="a" style="left:1154px;top:570px;width:1px;height:23px;background:#a8a8a8"></div>
<div class="t" style="left:1121.5px;top:574.3px;color:#222">0</div>
<svg style="left:1140px;top:579px" width="8" height="5"><path d="M0.5 0.5 H7 L3.75 3.5 Z" fill="#444"/></svg>
<svg style="left:1160px;top:576px" width="9" height="9"><path d="M1.5 1.5 L7 7 M7 1.5 L1.5 7" stroke="#555" stroke-width="1"/></svg>
<div class="t" style="left:1181px;top:574.3px;color:#444">% выполнения</div>

<div class="btn" style="left:1063px;top:603px;width:300px;height:40px"></div>
<svg style="left:1069px;top:614px" width="18" height="17" viewBox="0 0 18 17">
 <path d="M9 1.3 L16.8 15 H1.2 Z" fill="#fbd050" stroke="#d89a20" stroke-width="1.2" stroke-linejoin="round"/>
 <rect x="8.2" y="5.5" width="1.6" height="5.5" fill="#6a4a10"/><rect x="8.2" y="12" width="1.6" height="1.6" fill="#6a4a10"/>
</svg>
<div class="t" style="left:1177.5px;top:615.6px;color:#e81818">Возобновлено</div>
<div class="btn" style="left:1063px;top:653px;width:300px;height:40px"></div>
<svg style="left:1069px;top:664px" width="18" height="17" viewBox="0 0 18 17">
 <rect x="12.5" y="1" width="4" height="8.5" rx="1.2" fill="#f48a30" stroke="#d86a10" stroke-width="0.7"/>
 <path d="M12.5 9 L9.5 13.5 Q9 15.5 7.8 15.2 Q6.5 14.8 7.2 11.5 H2.5 Q1 11.5 1 10 V3 Q1 1 2.8 1 H12.5 Z" fill="#f8c870" stroke="#d08a30" stroke-width="0.8"/>
 <path d="M2 4 H6.5 M2 6.5 H6.5 M2 9 H6.5" stroke="#d08a30" stroke-width="0.8"/>
</svg>
<div class="t" style="left:1193px;top:666.3px;color:#777">Отказано</div>
<div class="btn" style="left:1063px;top:703px;width:300px;height:40px"></div>
<svg style="left:1069px;top:714px" width="18" height="17" viewBox="0 0 18 17">
 <path d="M5 7.5 V5 Q5 1.2 9 1.2 Q13 1.2 13 5 V7.5" fill="none" stroke="#9a9a9a" stroke-width="1.8"/>
 <rect x="1.5" y="7" width="15" height="9" rx="2" fill="#f8c850" stroke="#d09a20" stroke-width="0.8"/>
 <rect x="8.3" y="9.5" width="1.5" height="3.5" fill="#8a6010"/>
</svg>
<div class="t" style="left:1179px;top:715.5px;color:#1515e0">Согласование</div>

<div class="hdr" style="top:753px;height:30px"><span style="top:6.5px">Трудозатраты:</span></div>
<svg style="left:1273px;top:759px" width="19" height="17" viewBox="0 0 19 17">
 <circle cx="9.5" cy="9.5" r="6.3" fill="#c4c4c4" stroke="#9a9a9a" stroke-width="0.9"/>
 <rect x="2" y="1.2" width="4" height="3" transform="rotate(40 4 2.7)" fill="#b0b0b0"/>
 <path d="M9.5 9.5 L7 7" stroke="#888" stroke-width="1"/><path d="M13 7 L18 11 L13 15 Z" fill="#a6b0ba"/>
</svg>
<svg style="left:1313px;top:759px" width="19" height="17" viewBox="0 0 19 17">
 <circle cx="9.5" cy="9.5" r="6.3" fill="#c4c4c4" stroke="#9a9a9a" stroke-width="0.9"/>
 <rect x="2" y="1.2" width="4" height="3" transform="rotate(40 4 2.7)" fill="#b0b0b0"/>
 <path d="M9.5 9.5 L7 7" stroke="#888" stroke-width="1"/><rect x="12" y="10" width="6" height="6" fill="#a6b0ba" stroke="#8a949e" stroke-width="0.6"/>
</svg>
<svg style="left:1355px;top:760px" width="16" height="16" viewBox="0 0 16 16">
 <path d="M4 10.2 L10.8 3.4 L13.2 5.8 L6.4 12.6 Z" fill="#a8c0a0"/>
 <path d="M10.8 3.4 L12.2 2 Q12.8 1.5 13.4 2 L14.6 3.2 Q15.1 3.8 14.6 4.4 L13.2 5.8 Z" fill="#9aa4b4"/>
 <path d="M4 10.2 L6.4 12.6 L2.2 14.6 Z" fill="#d2c4b0"/>
</svg>
<div class="hdr" style="top:792px"><span style="top:5.5px">Теги:</span></div>
<div class="inp" style="left:1043px;top:827px;width:340px;height:25px"></div>
<div class="a" style="left:1361px;top:828px;width:1px;height:23px;background:#a8a8a8"></div>
<svg style="left:1368px;top:837px" width="8" height="5"><path d="M0.5 0.5 H7.5 L4 4 Z" fill="#444"/></svg>
<div class="t" style="left:1045.5px;top:831px;color:#b4b4b4">Выберите или введите тег</div>


<!-- ===== POPUP MENU ===== -->
<div class="a" style="left:376px;top:218px;width:377px;height:649px;background:#fff;border:1px solid #9a9a9a;box-shadow:1px 1px 0 #b0b0b0,2px 2px 1px rgba(0,0,0,.22),3px 3px 2px rgba(0,0,0,.08)"></div>
<div class="t" style="left:421px;top:227.3px;color:#333">Задание</div>
<div class="t" style="left:421px;top:257.3px;color:#333">Проблема</div>
<div class="t" style="left:421px;top:287.3px;color:#333">Наряд на работы</div>
<div class="t" style="left:421px;top:317.3px;color:#333">Причина отклонения от графика</div>
<div class="a" style="left:378px;top:341px;width:373px;height:1px;background:#dcd7c3"></div>
<div class="t" style="left:421px;top:351.3px;color:#333">Заказ поставщику</div>
<div class="t" style="left:421px;top:381.3px;color:#333">Поступление</div>
<div class="t" style="left:421px;top:411.3px;color:#333">Перемещение</div>
<div class="t" style="left:421px;top:441.3px;color:#333">Списание</div>
<div class="t" style="left:421px;top:471.3px;color:#333">Инвентаризация</div>
<div class="t" style="left:421px;top:501.3px;color:#333">Сборка (комплектация)</div>
<div class="t" style="left:421px;top:531.3px;color:#333">Разбиение комплектации</div>
<div class="a" style="left:378px;top:555px;width:373px;height:1px;background:#dcd7c3"></div>
<div class="t" style="left:421px;top:565.3px;color:#333">Закрепление сотрудников</div>
<div class="t" style="left:421px;top:595.3px;color:#333">Перемещение сотрудников</div>
<div class="t" style="left:421px;top:625.3px;color:#333">Снятие закрепления сотрудников</div>
<div class="a" style="left:378px;top:649px;width:373px;height:1px;background:#dcd7c3"></div>
<div class="t" style="left:421px;top:659.3px;color:#333">Начало обслуживания</div>
<div class="t" style="left:421px;top:689.3px;color:#333">Окончание обслуживания</div>
<div class="t" style="left:421px;top:719.3px;color:#333">Просмотр</div>
<div class="t" style="left:421px;top:749.3px;color:#333">Изменение показателей оборудования</div>
<div class="t" style="left:421px;top:779.3px;color:#333">Продажа</div>
<div class="a" style="left:378px;top:803px;width:373px;height:1px;background:#dcd7c3"></div>
<div class="a" style="left:378px;top:806px;width:373px;height:29px;background:#000"></div>
<div class="t" style="left:421px;top:813.3px;color:#e8e8e8">Права доступа к информационным ресурсам</div>
<div class="t" style="left:421px;top:843.3px;color:#333">Планирование бюджета</div>
<svg style="left:732px;top:353px" width="7" height="10"><path d="M0.8 0.3 L5.8 5 L0.8 9.7 Z" fill="#444"/></svg>
<svg style="left:395px;top:719px" width="14" height="14" viewBox="0 0 14 14">
 <path d="M2.5 9 L8 3.2 L11 6.2 L5.5 12 Z" fill="#4cad3c" stroke="#2e7f22" stroke-width="0.6"/>
 <path d="M2.5 9 L5.5 12 L1.8 12.8 Z" fill="#e0eed8"/>
 <path d="M2 2.5 L11.5 12" stroke="#d01c20" stroke-width="1.6"/>
</svg>
<!-- ===== RED ANNOTATION ===== -->
<div class="a" style="left:374px;top:190px;width:47px;height:31px;border:4.5px solid #e5392f;border-radius:8px"></div>
<svg style="left:0;top:0" width="1403" height="957">
 <path d="M392.3 220 L396.2 784" stroke="#e5392f" stroke-width="4.2"/>
 <path d="M382 777 L396.4 782.5 L410.3 777 L396.4 804.5 Z" fill="#e5392f"/>
</svg>

<div id="content"></div>
</body></html>
